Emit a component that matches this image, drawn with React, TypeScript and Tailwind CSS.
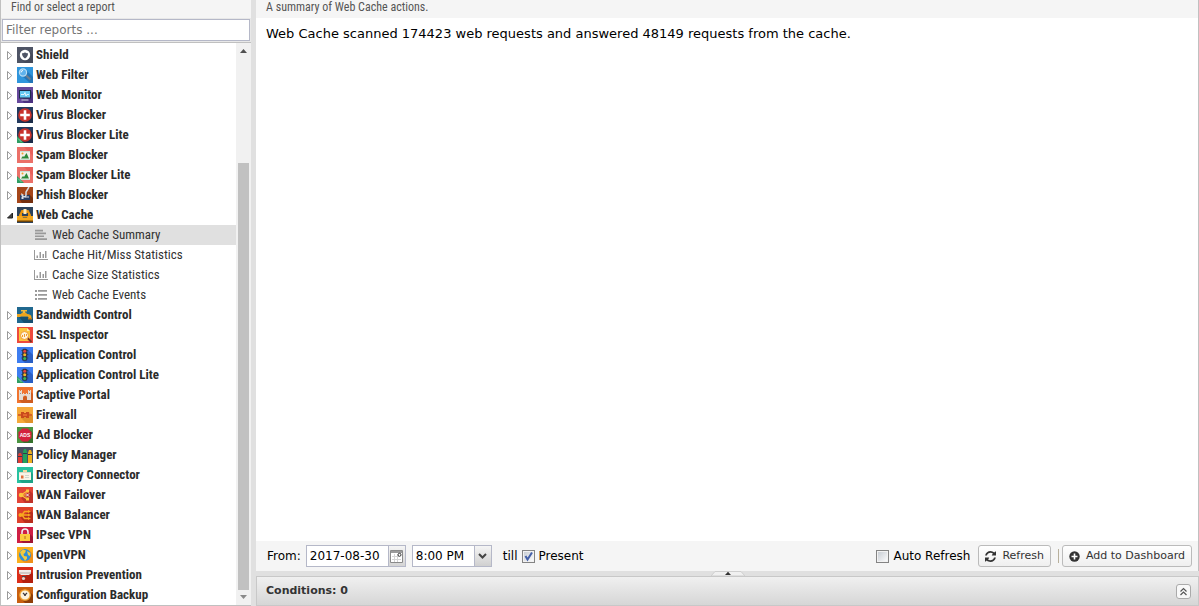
import { useState } from "react";
import type { ReactNode } from "react";

interface TreeItem {
  name: string;
  icon: ReactNode;
  children?: { name: string; kind: "text" | "chart" | "list" }[];
}

const liteRibbon = (
  <>
    <path d="M0 9l7 7H0z" fill="#2e9e63" />
    <path d="M1 11.5l3.5 3.5" stroke="#7fd0a5" strokeWidth="1" />
  </>
);

const virusIcon = (
  <>
    <path d="M0 0h16v16H0z" fill="#233a5e" />
    <path d="M13 3l3 3v10H6l-3-3z" fill="#1b2c49" />
    <circle cx="8" cy="8" r="6.8" fill="#c8322b" />
    <path d="M6.7 3.2h2.6v3.5h3.5v2.6H9.3v3.5H6.7V9.3H3.2V6.7h3.5z" fill="#fff" />
  </>
);

const spamIcon = (
  <>
    <path d="M0 0h16v16H0z" fill="#e8605a" />
    <path d="M0 0h7l9 9v7H0z" fill="#ed7b72" opacity=".6" />
    <path d="M3 4h10v9H3z" fill="#f1efe6" />
    <path d="M3 4h10v1H3zM3 12h10v1H3z" fill="#c9ded2" />
    <path d="M4 11.5l2-2.500 1 1 2.500-4 2.500 5.500z" fill="#2d8a3c" />
    <circle cx="5.500" cy="6.500" r="1" fill="#f0a030" />
  </>
);

const appControlIcon = (
  <>
    <path d="M0 0h16v16H0z" fill="#3d7df0" />
    <path d="M10 2l6 6v8H8l-3-3z" fill="#2a5fc4" />
    <rect x="5.2" y="1.8" width="5" height="12" rx="1.5" fill="#2c3548" />
    <path d="M4.3 3.5h7M4.3 7.5h7M4.3 11h7" stroke="#2c3548" strokeWidth=".7" />
    <circle cx="7.7" cy="4.2" r="1.5" fill="#e8453c" />
    <circle cx="7.7" cy="7.8" r="1.5" fill="#f6b626" />
    <circle cx="7.7" cy="11.4" r="1.5" fill="#35b556" />
  </>
);

const reports: TreeItem[] = [
  {
    name: "Shield",
    icon: (
      <>
        <path d="M0 0h16v16H0z" fill="#4e5465" />
        <path d="M12 4l4 4v8H8l-4-4z" fill="#454a5a" />
        <circle cx="8" cy="8" r="5.200" fill="#fff" />
        <path d="M5 6.3C6.500 6.300 7.300 6 8 5.300c.7.700 1.500 1 3 1 0 2.400-1 4.200-3 5.100-2-.9-3-2.700-3-5.100z" fill="#4e5465" />
      </>
    ),
  },
  {
    name: "Web Filter",
    icon: (
      <>
        <path d="M0 0h16v16H0z" fill="#2f95dc" />
        <path d="M10 4l6 6v6h-3L5 9z" fill="#2376b8" />
        <path d="M9 8.500l4.500 4" stroke="#6d7f90" strokeWidth="2.200" />
        <circle cx="6" cy="5.500" r="3.600" fill="#5fb2ec" stroke="#b9def5" strokeWidth="1.200" />
        <path d="M4 5.500a2 2 0 012-2" stroke="#fff" fill="none" />
      </>
    ),
  },
  {
    name: "Web Monitor",
    icon: (
      <>
        <path d="M0 0h16v16H0z" fill="#66489c" />
        <path d="M13 3l3 3v10H7l-2-3z" fill="#4b3180" />
        <path d="M2 3h12v8.500H2z" fill="#1f2c4c" />
        <path d="M3 4h10v6.500H3z" fill="#65c7f2" />
        <path d="M4 7.500h3l1-2L9 9l.8-1.500H12" stroke="#fff" fill="none" strokeWidth=".8" />
        <path d="M4.500 13h7" stroke="#e2e3ea" />
      </>
    ),
  },
  { name: "Virus Blocker", icon: virusIcon },
  { name: "Virus Blocker Lite", icon: <>{virusIcon}{liteRibbon}</> },
  { name: "Spam Blocker", icon: spamIcon },
  { name: "Spam Blocker Lite", icon: <>{spamIcon}{liteRibbon}</> },
  {
    name: "Phish Blocker",
    icon: (
      <>
        <path d="M0 0h16v16H0z" fill="#a5461a" />
        <path d="M12 7l4 4v5H5l-2-3z" fill="#75300f" />
        <path d="M3 8h10v5H3z" fill="#263b62" />
        <path d="M4.500 10h2v2h-2zM8 9.500h4v1H8z" fill="#d9e2ec" />
        <path d="M12 0L9 5v3c0 2.500-4 2.500-4-.5l1.500 1" stroke="#d8dce2" fill="none" strokeWidth="1.500" />
      </>
    ),
  },
  {
    name: "Web Cache",
    icon: (
      <>
        <path d="M0 0h16v16H0z" fill="#2d435c" />
        <path d="M2 8l2.500-5h7L14 8v2H2z" fill="#e8940f" />
        <path d="M5 6h6v3H5z" fill="#2d435c" />
        <path d="M6.500 2h3v5h-3z" fill="#ffe9b5" />
        <path d="M0 9h5l1 1.500h4L11 9h5v5H0z" fill="#f6a81c" />
        <path d="M0 13.500h16V15H0z" fill="#6b420a" />
      </>
    ),
    children: [
      { name: "Web Cache Summary", kind: "text" },
      { name: "Cache Hit/Miss Statistics", kind: "chart" },
      { name: "Cache Size Statistics", kind: "chart" },
      { name: "Web Cache Events", kind: "list" },
    ],
  },
  {
    name: "Bandwidth Control",
    icon: (
      <>
        <path d="M0 0h16v16H0z" fill="#20688f" />
        <path d="M14 10l2 2v4H7l-5-6z" fill="#174f70" />
        <path d="M0 7h4l1-1.500h4L10 7c3 0 4.500 1 4.500 4h-3c0-1-.5-1.500-1.500-1.500H4L3 10H0z" fill="#efa51d" />
        <path d="M4 3h6v1.500H8V6H6V4.500H4z" fill="#f5b93a" />
        <path d="M11 11h4v1.500h-4z" fill="#c97d10" />
      </>
    ),
  },
  {
    name: "SSL Inspector",
    icon: (
      <>
        <path d="M0 0h16v16H0z" fill="#ee4a3c" />
        <path d="M2 1h8l3 3v10H2z" fill="#fbc53c" />
        <path d="M10 1l3 3h-3z" fill="#fde9a6" />
        <path d="M10.500 11l4 4" stroke="#7d3328" strokeWidth="1.800" />
        <circle cx="7.500" cy="8.500" r="4" fill="#fdf3dc" stroke="#f19a2c" />
        <path d="M5.500 8v2M7.500 7v3M9.500 7v2" stroke="#f19a2c" />
      </>
    ),
  },
  { name: "Application Control", icon: appControlIcon },
  { name: "Application Control Lite", icon: <>{appControlIcon}{liteRibbon}</> },
  {
    name: "Captive Portal",
    icon: (
      <>
        <path d="M0 0h16v16H0z" fill="#f1742f" />
        <path d="M14 5l2 2v9H5l-3-3z" fill="#cf5d20" />
        <path d="M2 3h1v1h1V3h1v4h1V6h1v1h2V6h1v1h1V3h1v1h1V3h1v10h-4v-2.500a2 2 0 00-4 0V13H2z" fill="#e4dcd3" />
        <path d="M3 6h1v1H3zM12 6h1v1h-1z" fill="#9b8b80" />
      </>
    ),
  },
  {
    name: "Firewall",
    icon: (
      <>
        <path d="M0 0h16v16H0z" fill="#f5a93a" />
        <path d="M12 5l4 4v7H9l-5-5z" fill="#e0912a" />
        <path d="M1 7h14v2H1z" fill="#d86426" />
        <path d="M4 5h3v1h2V5h3v6H9v-1H7v1H4z" fill="#c94a1c" />
        <path d="M6 7h4v2H6z" fill="#e4682c" />
      </>
    ),
  },
  {
    name: "Ad Blocker",
    icon: (
      <>
        <path d="M0 0h16v16H0z" fill="#4b9440" />
        <path d="M13 3l3 3v10H7l-3-3z" fill="#36722d" />
        <path d="M5.200 1.500h5.600l3.700 3.700v5.600l-3.700 3.700H5.200l-3.700-3.700V5.200z" fill="#d4213d" />
        <text x="8" y="9.800" textAnchor="middle" fontSize="5" fontWeight="bold" fill="#fff" fontFamily="Liberation Sans, sans-serif">ADS</text>
      </>
    ),
  },
  {
    name: "Policy Manager",
    icon: (
      <>
        <path d="M0 0h16v16H0z" fill="#4a5062" />
        <path d="M1 8l1-2h2l1 2v8H1z" fill="#e23b33" />
        <path d="M6 5l1-3h2l1 3v11H6z" fill="#21a25a" />
        <path d="M11 6l1-3h2l1 3v10h-4z" fill="#eeb01e" />
        <path d="M1 9h4v1H1zM6 6h4v1H6zM11 7h4v1h-4z" fill="#343947" />
      </>
    ),
  },
  {
    name: "Directory Connector",
    icon: (
      <>
        <path d="M0 0h16v16H0z" fill="#28c2a0" />
        <path d="M14 5l2 2v9H5l-3-3z" fill="#1ea387" />
        <path d="M2 5h12v8H2z" fill="#f8f4e8" />
        <path d="M6 3h4v3H6z" fill="#f3d9a1" />
        <path d="M2 5h12v1H2z" fill="#ded9c8" />
        <path d="M4 8.500h2.500v3H4z" fill="#e26c3a" />
        <path d="M8 8.500h4M8 10.500h4" stroke="#c5cdc8" strokeWidth=".8" />
      </>
    ),
  },
  {
    name: "WAN Failover",
    icon: (
      <>
        <path d="M0 0h16v16H0z" fill="#e34437" />
        <path d="M13 4l3 3v9H8l-4-5z" fill="#c0332a" />
        <path d="M4 8l6-4M4 8h5M4 8l6 4" stroke="#fbc33c" strokeWidth="1.200" />
        <circle cx="4" cy="8" r="2.200" fill="#fbc33c" />
        <path d="M9 2.500h3v3H9zM9 10.500h3v3H9z" fill="#fbc33c" />
        <path d="M9 6.500l3 3M12 6.500l-3 3" stroke="#fff" strokeWidth=".9" />
      </>
    ),
  },
  {
    name: "WAN Balancer",
    icon: (
      <>
        <path d="M0 0h16v16H0z" fill="#de412b" />
        <path d="M14 4l2 2v10H8l-5-6z" fill="#b92d1d" />
        <path d="M3 8h9M5 8l2.500-3.500H12M5 8l2.500 3.500H12" stroke="#f8a81f" strokeWidth="1.400" fill="none" />
        <circle cx="3.500" cy="8" r="2" fill="#f8a81f" />
        <path d="M11 3l3 1.500L11 6zM11 6.500L14 8l-3 1.500zM11 10l3 1.500-3 1.500z" fill="#f8a81f" />
      </>
    ),
  },
  {
    name: "IPsec VPN",
    icon: (
      <>
        <path d="M0 0h16v16H0z" fill="#cf1f44" />
        <path d="M13 7l3 3v6H6l-3-3z" fill="#a01634" />
        <path d="M5 8V5a3 3 0 016 0v3" stroke="#eef0f2" strokeWidth="1.500" fill="none" />
        <path d="M3 7h10v7H3z" fill="#fccb3c" />
        <path d="M7.300 9h1.400v3H7.300z" fill="#c9862a" />
      </>
    ),
  },
  {
    name: "OpenVPN",
    icon: (
      <>
        <path d="M0 0h16v16H0z" fill="#fbb01d" />
        <path d="M13 4l3 3v9H8l-4-3z" fill="#ef9019" />
        <circle cx="8" cy="8" r="6" fill="#2d8fd6" />
        <path d="M3 5l3-2.500 3 1L8 6 6.500 7 7 9l3 .5v2L8 14l-1-2L4 8zM10 4l3.500 2-.5 3-2-1z" fill="#f3c93c" />
      </>
    ),
  },
  {
    name: "Intrusion Prevention",
    icon: (
      <>
        <path d="M0 0h16v16H0z" fill="#db2e19" />
        <path d="M14 5l2 2v9H6l-2-4z" fill="#b4200e" />
        <path d="M2 3h12v3l-2 2H4L2 6z" fill="#f1ece8" />
        <path d="M2 5h12v1l-1 1H3L2 6z" fill="#d3cac5" />
        <path d="M5 9h4v1H5z" fill="#4a4448" />
        <circle cx="6.500" cy="11.500" r="1.600" fill="#ded5d0" />
      </>
    ),
  },
  {
    name: "Configuration Backup",
    icon: (
      <>
        <path d="M0 0h16v16H0z" fill="#c9600f" />
        <path d="M12 4l4 4v8H8l-4-4z" fill="#8f3f08" />
        <circle cx="8" cy="8" r="5.200" fill="#fbf1dc" stroke="#f0a02c" strokeWidth="1.300" />
        <path d="M6 6l2 2 2-2" stroke="#3d3a40" strokeWidth="1.200" fill="none" />
        <circle cx="8" cy="8" r="1" fill="#3d3a40" />
      </>
    ),
  },
];

function ChildIcon({ kind }: { kind: "text" | "chart" | "list" }) {
  return (
    <svg width="14" height="12" viewBox="0 0 14 12" fill="#999" className="shrink-0" aria-hidden="true">
      {kind === "text" && (
        <path d="M1 .8h8v1.700H1zM1 3.600h11v1.700H1zM1 6.400h9v1.700H1zM1 9.200h12v1.700H1z" />
      )}
      {kind === "chart" && (
        <path d="M0 1h1v9h13v1H0zM2.500 6.500H4V9H2.500zM5.500 3H7v6H5.500zM8.500 5H10v4H8.500zM11 2h1.500v7H11z" />
      )}
      {kind === "list" && (
        <path d="M1 1h2v2H1zM4 1h9v1.700H4zM1 5h2v2H1zM4 5h9v1.700H4zM1 9h2v2H1zM4 9h9v1.700H4z" />
      )}
    </svg>
  );
}

function TreeRow({ item }: { item: TreeItem }) {
  return (
    <li>
      <button type="button" className="flex h-5 w-full items-center pl-1 text-left font-bold whitespace-nowrap text-[#2b2b2b]">
        <svg width="12" height="12" viewBox="0 0 12 12" className="shrink-0" aria-hidden="true">
          {item.children ? (
            <path d="M7.500 4v5h-5z" fill="#444" stroke="#222" />
          ) : (
            <path d="M2.500 2.500v8L6.800 6.500z" fill="#fff" stroke="#999" />
          )}
        </svg>
        <svg width="16" height="16" viewBox="0 0 16 16" className="mr-[3px] shrink-0" aria-hidden="true">
          {item.icon}
        </svg>
        {item.name}
      </button>
      {item.children && (
        <ul>
          {item.children.map((child) => (
            <li key={child.name}>
              <button
                type="button"
                className={`flex h-5 w-full items-center gap-1 pl-[33px] text-left whitespace-nowrap text-[#333] ${
                  child.name === "Web Cache Summary" ? "bg-[#e0e0e0]" : ""
                }`}
              >
                <ChildIcon kind={child.kind} />
                {child.name}
              </button>
            </li>
          ))}
        </ul>
      )}
    </li>
  );
}

function Sidebar() {
  return (
    <aside className="flex w-[251px] shrink-0 flex-col border-l border-[#c0c0c0] bg-white font-['Roboto_Condensed','Liberation_Sans_Narrow',Roboto,sans-serif] text-[13px] leading-4">
      <h2 className="h-[18px] shrink-0 bg-[#f5f5f5] pl-[10px] text-[12px] leading-[14px] text-[#555]">
        Find or select a report
      </h2>
      <div className="shrink-0 border-b border-[#c0c0c0] bg-[#e8e8e8] p-px">
        <input
          type="text"
          aria-label="Filter reports"
          placeholder="Filter reports ..."
          className="block h-[22px] w-full border border-[#b5b8c8] bg-white px-[3px] font-['DejaVu_Sans',sans-serif] text-[12px] outline-none placeholder:text-[#757575]"
        />
      </div>
      <div className="flex min-h-0 flex-1 border-b border-[#c0c0c0]">
        <ul className="min-w-0 flex-1 overflow-hidden pt-[2px]">
          {reports.map((item) => (
            <TreeRow key={item.name} item={item} />
          ))}
        </ul>
        <div className="flex w-[15px] flex-col items-center bg-[#f1f1f1]">
          <svg width="15" height="17" viewBox="0 0 15 17" aria-hidden="true">
            <path d="M4 10h7L7.500 6z" fill="#505050" />
          </svg>
          <div className="min-h-0 flex-[103]" />
          <div className="min-h-0 w-[11px] flex-[427] bg-[#c1c1c1]" />
          <svg width="15" height="15" viewBox="0 0 15 15" aria-hidden="true">
            <path d="M4 5h7L7.500 9z" fill="#8a8a8a" />
          </svg>
        </div>
      </div>
    </aside>
  );
}

interface CheckProps {
  label: string;
  checked: boolean;
  onChange: (value: boolean) => void;
}

function Check({ label, checked, onChange }: CheckProps) {
  return (
    <label className="flex items-center gap-1">
      <span className="relative flex">
        <input
          type="checkbox"
          checked={checked}
          onChange={(e) => onChange(e.target.checked)}
          className="size-[13px] appearance-none border border-[#848484] bg-linear-to-br from-[#c4c9d0] to-white shadow-[inset_0_0_0_1px_#f2f2f2]"
        />
        {checked && (
          <svg width="13" height="13" viewBox="0 0 13 13" className="pointer-events-none absolute inset-0" aria-hidden="true">
            <path d="M3.500 6l2 3.500L10 2.500" stroke="#4560a8" strokeWidth="2" fill="none" />
          </svg>
        )}
      </span>
      {label}
    </label>
  );
}

function Toolbar() {
  const [date, setDate] = useState("2017-08-30");
  const [time, setTime] = useState("8:00 PM");
  const [present, setPresent] = useState(true);
  const [autoRefresh, setAutoRefresh] = useState(false);

  return (
    <div className="flex h-[30px] shrink-0 items-center bg-[#f5f5f5] pr-[6px] pl-[11px] whitespace-nowrap">
      <label htmlFor="from-date" className="mr-[5px]">
        From:
      </label>
      <div className="mr-[6px] flex h-[22px] w-[100px] border border-[#b5b8c8]">
        <input
          id="from-date"
          type="text"
          value={date}
          onChange={(e) => setDate(e.target.value)}
          className="w-[81px] bg-white pl-[3px] outline-none"
        />
        <button type="button" aria-label="Pick a date" className="flex flex-1 items-center justify-center border-l border-[#b5b8c8] bg-linear-to-b from-[#f5f5f5] to-[#d4d4d4]">
          <svg width="13" height="13" viewBox="0 0 13 13" aria-hidden="true">
            <path d="M.5.500h12v12H.5z" fill="#fff" stroke="#8a8a8a" />
            <path d="M1 1h11v2H1z" fill="#9b9b9b" />
            <path d="M2 6.500h7M2 9.500h9M4.500 4v8M7.500 4v8" stroke="#d4d4d4" />
            <circle cx="9.500" cy="4.800" r="1.500" fill="#fff" stroke="#333" />
          </svg>
        </button>
      </div>
      <div className="relative mr-[11px] flex h-[22px] w-20">
        <select
          aria-label="From time"
          value={time}
          onChange={(e) => setTime(e.target.value)}
          className="w-full appearance-none border border-[#b5b8c8] bg-white pl-[3px] outline-none"
        >
          <option>8:00 PM</option>
          <option>9:00 PM</option>
        </select>
        <span className="pointer-events-none absolute inset-y-px right-px flex w-[17px] items-center justify-center border-l border-[#b5b8c8] bg-linear-to-b from-[#f5f5f5] to-[#d0d0d0]">
          <svg width="9" height="6" viewBox="0 0 9 6" aria-hidden="true">
            <path d="M1 1l3.500 3.500L8 1" stroke="#444" strokeWidth="2" fill="none" />
          </svg>
        </span>
      </div>
      <span className="mr-1">till</span>
      <Check label="Present" checked={present} onChange={setPresent} />
      <div className="ml-auto flex items-center">
        <Check label="Auto Refresh" checked={autoRefresh} onChange={setAutoRefresh} />
        <button type="button" className="ml-2 flex h-[22px] items-center gap-[6px] rounded-[3px] border border-[#bbb] bg-linear-to-b from-white to-[#efefef] px-[6px] text-[11px] text-[#333]">
          <svg width="11" height="11" viewBox="0 0 1536 1536" fill="#333" aria-hidden="true">
            <path d="M1511 928q0 5-1 7-64 268-268 434.500T764 1536q-146 0-282.500-55T238 1324l-129 129q-19 19-45 19t-45-19-19-45V960q0-26 19-45t45-19h448q26 0 45 19t19 45-19 45l-137 137q71 66 161 102t187 36q134 0 250-65t186-179q11-17 53-117 8-23 30-23h192q13 0 22.500 9.500t9.500 22.500zm25-800v448q0 26-19 45t-45 19h-448q-26 0-45-19t-19-45 19-45l138-138Q969 256 768 256q-134 0-250 65T332 500q-11 17-53 117-8 23-30 23H50q-13 0-22.500-9.500T18 608v-7q65-268 270-434.500T768 0q146 0 284 55.500T1297 212l130-129q19-19 45-19t45 19 19 45z" />
          </svg>
          Refresh
        </button>
        <span className="mr-[3px] ml-[7px] h-[14px] w-px bg-[#b8b09c]" />
        <button type="button" className="flex h-[22px] items-center gap-[6px] rounded-[3px] border border-[#bbb] bg-linear-to-b from-white to-[#efefef] px-[6px] text-[11px] text-[#333]">
          <svg width="11" height="11" viewBox="0 0 11 11" aria-hidden="true">
            <circle cx="5.500" cy="5.500" r="5.200" fill="#333" />
            <path d="M5.500 2.500v6M2.500 5.500h6" stroke="#fff" strokeWidth="1.600" />
          </svg>
          Add to Dashboard
        </button>
      </div>
    </div>
  );
}

export default function App() {
  return (
    <div className="flex h-screen overflow-hidden bg-[#e0e0e0] font-['DejaVu_Sans',sans-serif] text-[12px] text-black">
      <Sidebar />
      <main className="ml-[5px] flex min-w-0 flex-1 flex-col">
        <div className="flex min-h-0 flex-1 flex-col border-r border-[#c0c0c0] bg-white">
          <h1 className="h-[18px] shrink-0 bg-[#f5f5f5] pl-[10px] font-['Roboto_Condensed','Liberation_Sans_Narrow',Roboto,sans-serif] text-[12px] leading-[14px] text-[#555]">
            A summary of Web Cache actions.
          </h1>
          <p className="min-h-0 flex-1 px-[10px] pt-2 text-[13px] leading-4">
            Web Cache scanned 174423 web requests and answered 48149 requests from the cache.
          </p>
          <Toolbar />
        </div>
        <button type="button" aria-label="Expand conditions" className="flex h-[5px] shrink-0 justify-center">
          <svg width="34" height="5" viewBox="0 0 34 5" aria-hidden="true">
            <path d="M0 5l4-4.500h26L34 5z" fill="#f0f0f0" stroke="#cfcfcf" />
            <path d="M14 4h6L17 .8z" fill="#333" />
          </svg>
        </button>
        <section className="flex h-[30px] shrink-0 items-center justify-between border border-[#c8c8c8] bg-linear-to-b from-[#f0f0f0] to-[#d6d6d6] pr-[7px] pl-[9px]">
          <h2 className="text-[11px] font-bold text-[#333]">Conditions: 0</h2>
          <button type="button" aria-label="Show conditions" className="flex size-[15px] items-center justify-center rounded-[3px] border border-[#aaa] bg-[#f8f8f8]">
            <svg width="9" height="9" viewBox="0 0 9 9" aria-hidden="true">
              <path d="M1.500 4.500l3-3 3 3M1.500 8l3-3 3 3" stroke="#555" strokeWidth="1.200" fill="none" />
            </svg>
          </button>
        </section>
      </main>
    </div>
  );
}
